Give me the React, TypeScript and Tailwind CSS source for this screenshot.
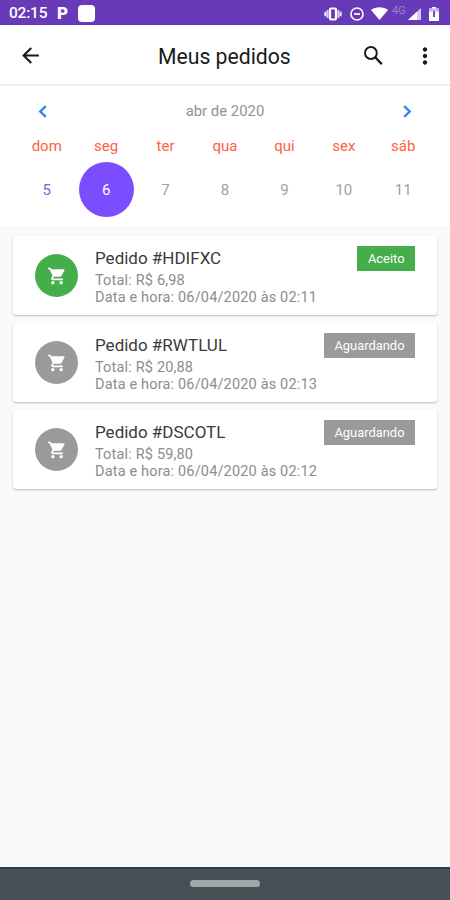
import { MdArrowBack, MdMoreVert, MdShoppingCart } from "react-icons/md";

type Order = {
  code: string;
  total: string;
  date: string;
  status: "Aceito" | "Aguardando";
};

const WEEK = [
  { name: "dom", day: 5 },
  { name: "seg", day: 6 },
  { name: "ter", day: 7 },
  { name: "qua", day: 8 },
  { name: "qui", day: 9 },
  { name: "sex", day: 10 },
  { name: "sáb", day: 11 },
];

const ORDERS: Order[] = [
  { code: "HDIFXC", total: "6,98", date: "06/04/2020 às 02:11", status: "Aceito" },
  { code: "RWTLUL", total: "20,88", date: "06/04/2020 às 02:13", status: "Aguardando" },
  { code: "DSCOTL", total: "59,80", date: "06/04/2020 às 02:12", status: "Aguardando" },
];

const SELECTED_DAY = 6;

const StatusBar = () => (
  <div className="flex h-[25px] shrink-0 items-center bg-[#673ab7] pt-[2px] pl-[9px] pr-[11px] text-white">
    <span className="w-[38px] whitespace-nowrap pt-px text-[15.5px] leading-none font-medium tracking-[-0.2px]">
      02:15
    </span>
    <span className="ml-[10px] w-[12px] text-[17px] leading-none font-black">P</span>
    <div className="ml-[9px] size-[17px] rounded-[4px] bg-white" />

    {/* Vibração */}
    <svg className="ml-auto h-[14px] w-[18px]" viewBox="0 0 18 14" fill="none" stroke="currentColor">
      <rect x="6" y="1.5" width="6" height="11" rx="1" strokeWidth="2.2" />
      <path d="M3.6 3v8M14.4 3v8" strokeWidth="2" opacity=".75" />
      <path d="M1.4 4.8v4.4M16.6 4.8v4.4" strokeWidth="2.2" opacity=".85" />
    </svg>
    {/* Não perturbe */}
    <svg className="ml-[8px] size-[14px]" viewBox="0 0 14 14" fill="none" stroke="currentColor">
      <circle cx="7" cy="7" r="6" strokeWidth="1.6" />
      <path d="M4 7h6" strokeWidth="1.7" />
    </svg>
    <svg className="ml-[7px] h-[13px] w-[17px]" viewBox="0 0 17 13" fill="currentColor">
      <path d="M0 3C4.8-.8 12.2-.8 17 3L8.5 13z" />
    </svg>
    <span className="ml-[4px] w-[16px] self-start pt-[3px] text-[11px] leading-none text-[#9f83d2]">4G</span>
    <svg className="h-[12px] w-[13px]" viewBox="0 0 13 12">
      <path d="M13 0v12H0z" fill="#d6c8ef" />
      <path d="M9 3.7V12H0z" fill="#fff" />
    </svg>
    <svg className="ml-[8px] h-[14px] w-[10px]" viewBox="0 0 10 14">
      <path d="M3 0h4v1.5h3V14H0V1.5h3z" fill="#fff" />
      <path d="M0 1.5h10v3H0z" fill="#c5b4e5" />
      <path d="M5 4v6" stroke="#673ab7" strokeWidth="1.8" />
    </svg>
  </div>
);

const Header = () => (
  <header className="flex h-[61px] shrink-0 items-center border-b-2 border-[#eeeeee] pt-[2px] pl-[18px] pr-[12px] text-[#1a1a1a]">
    <MdArrowBack className="size-[25px]" />
    <h1 className="ml-[115px] whitespace-nowrap pt-[2px] text-[21.2px] leading-none font-normal">Meus pedidos</h1>
    <svg className="ml-auto size-[20px]" viewBox="0 0 20 20" fill="none" stroke="currentColor">
      <circle cx="7.9" cy="7" r="5.9" strokeWidth="2" />
      <path d="m12.2 11.3 6.6 6.8" strokeWidth="2.3" />
    </svg>
    <MdMoreVert className="ml-[29px] size-[26px] shrink-0" />
  </header>
);

const Calendar = () => (
  <section className="h-[140px] shrink-0 bg-white">
    <div className="flex h-[50px] items-center justify-between px-[38px] text-[#2f86f6]">
      <svg className="h-[13px] w-[9px]" viewBox="0 0 9 13" fill="none" stroke="currentColor" strokeWidth="2.4">
        <path d="M7.8 1.2 2.3 6.5l5.5 5.3" />
      </svg>
      <span className="text-[14.9px] text-[#929292]">abr de 2020</span>
      <svg className="h-[13px] w-[9px]" viewBox="0 0 9 13" fill="none" stroke="currentColor" strokeWidth="2.4">
        <path d="m1.2 1.2 5.5 5.3-5.5 5.3" />
      </svg>
    </div>
    <div className="grid grid-cols-7 px-[17px]">
      {WEEK.map(({ name, day }) => (
        <div key={name} className="flex flex-col items-center">
          <span className="h-[20px] text-[15px] leading-[20px] text-[#ff6142]">{name}</span>
          <span
            className={`mt-[6px] flex size-[55px] items-center justify-center rounded-full pt-[2px] text-[15px] ${
              day === SELECTED_DAY ? "bg-[#7c4dff] text-white" : day < SELECTED_DAY ? "text-[#7668cf]" : "text-[#a0a0a0]"
            }`}
          >
            {day}
          </span>
        </div>
      ))}
    </div>
  </section>
);

const OrderCard = ({ order }: { order: Order }) => {
  const color = order.status === "Aceito" ? "bg-[#43ae4a]" : "bg-[#9a9a9a]";

  return (
    <div className="flex h-[79px] rounded-[3px] bg-white px-[22px] shadow-[0_1px_2px_rgba(0,0,0,0.25)]">
      <div className={`mt-[18px] flex size-[43px] items-center justify-center rounded-full text-white ${color}`}>
        <MdShoppingCart className="size-[20px]" />
      </div>
      <div className="ml-[17px] flex-1 pt-[11px] whitespace-nowrap">
        <p className="text-[17px] leading-[22px] text-[#3a3a3a]">Pedido #{order.code}</p>
        <p className="mt-[3px] text-[14.5px] leading-[17px] tracking-[0.17px] text-[#8c8c8c]">Total: R$ {order.total}</p>
        <p className="text-[14.5px] leading-[17px] tracking-[0.17px] text-[#8c8c8c]">Data e hora: {order.date}</p>
      </div>
      <span className={`mt-[10px] flex h-[25px] items-center px-[10.5px] text-[12.9px] text-white ${color}`}>
        {order.status}
      </span>
    </div>
  );
};

export default function App() {
  return (
    <div className="flex h-[900px] w-[450px] flex-col overflow-hidden bg-white font-[Roboto,sans-serif]">
      <StatusBar />
      <Header />
      <Calendar />
      <main className="flex flex-1 flex-col gap-[8.2px] bg-[#fafafa] px-[13px] pt-[10px]">
        {ORDERS.map((order) => (
          <OrderCard key={order.code} order={order} />
        ))}
      </main>
      <div className="flex h-[33px] shrink-0 items-center justify-center border-t-2 border-[#343c41] bg-[#465056]">
        <div className="mb-[2px] h-[7px] w-[70px] rounded-full bg-[#a2a8aa]" />
      </div>
    </div>
  );
}
